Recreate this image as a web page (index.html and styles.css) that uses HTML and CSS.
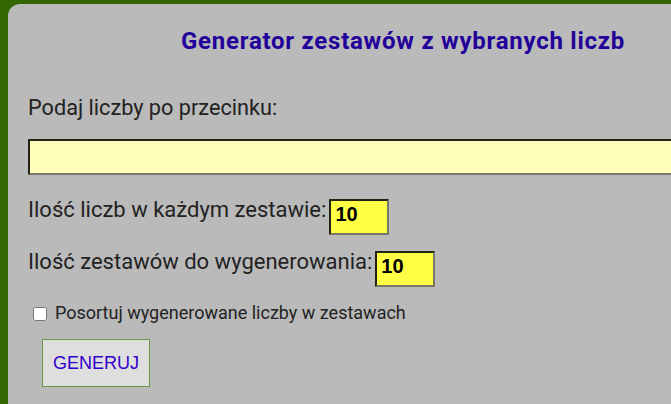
FILE: index.html
```html
<!DOCTYPE html>
<html lang="pl">
<head>
<meta charset="utf-8">
<title>Generator zestawów</title>
<link rel="stylesheet" href="styles.css">
</head>
<body>
<div class="panel">
  <h1 class="title">Generator zestawów z wybranych liczb</h1>
  <p class="label">Podaj liczby po przecinku:</p>
  <input class="wide" type="text">
  <div class="row row1">
    <span class="label">Ilość liczb w każdym zestawie:</span>
    <input class="num" type="text" value="10">
  </div>
  <div class="row row2">
    <span class="label">Ilość zestawów do wygenerowania:</span>
    <input class="num" type="text" value="10">
  </div>
  <label class="check"><input type="checkbox"> Posortuj wygenerowane liczby w zestawach</label>
  <button class="btn">GENERUJ</button>
</div>
</body>
</html>
```
FILE: styles.css
```css
html, body {
  margin: 0;
  padding: 0;
  background: #336600;
  overflow: hidden;
}
body {
  width: 671px;
  height: 404px;
}
.panel {
  margin: 4px 0 0 8px;
  width: 663px;
  height: 400px;
  overflow: hidden;
  background: #bababa;
  border-top-left-radius: 12px;
  padding: 23px 0 0 20px;
  box-sizing: border-box;
  font-family: Roboto, "Liberation Sans", sans-serif;
  color: #222222;
}
.title {
  margin: 0 0 0 153px;
  font-size: 24px;
  font-weight: bold;
  line-height: 28px;
  letter-spacing: 0.75px;
  white-space: nowrap;
  color: #220099;
}
.label {
  font-size: 22px;
  line-height: 26px;
  white-space: nowrap;
}
p.label {
  margin: 40px 0 0 0;
  font-size: 21.7px;
}
.wide {
  display: block;
  margin-top: 18px;
  width: 700px;
  height: 36px;
  box-sizing: border-box;
  border: 2px solid;
  border-color: #222211 #777766 #777766 #222211;
  background: #ffffbb;
  padding: 0 4px;
  font-size: 18px;
}
.row {
  display: flex;
  align-items: flex-start;
  gap: 3px;
}
.row1 { margin-top: 24px; }
.row2 { margin-top: 16px; }
.row .label { margin-top: -2px; }
.num {
  width: 60px;
  height: 36px;
  box-sizing: border-box;
  border: 2px solid;
  border-color: #222211 #777766 #777766 #222211;
  background: #ffff44;
  font-family: "Liberation Sans", Arial, sans-serif;
  font-weight: bold;
  font-size: 20px;
  color: #000;
  padding: 2px 4px 7px 4px;
}
.check {
  display: flex;
  align-items: center;
  margin-top: 15px;
  font-size: 18px;
  line-height: 22px;
}
.check input {
  margin: 2px 8px 0 5px;
  width: 14px;
  height: 14px;
}
.btn {
  display: block;
  margin: 15px 0 0 14px;
  width: 108px;
  height: 48px;
  background: #dedede;
  border: 1px solid #669944;
  color: #3300cc;
  font-family: "Liberation Sans", Arial, sans-serif;
  font-size: 18px;
  padding: 0;
}
```
